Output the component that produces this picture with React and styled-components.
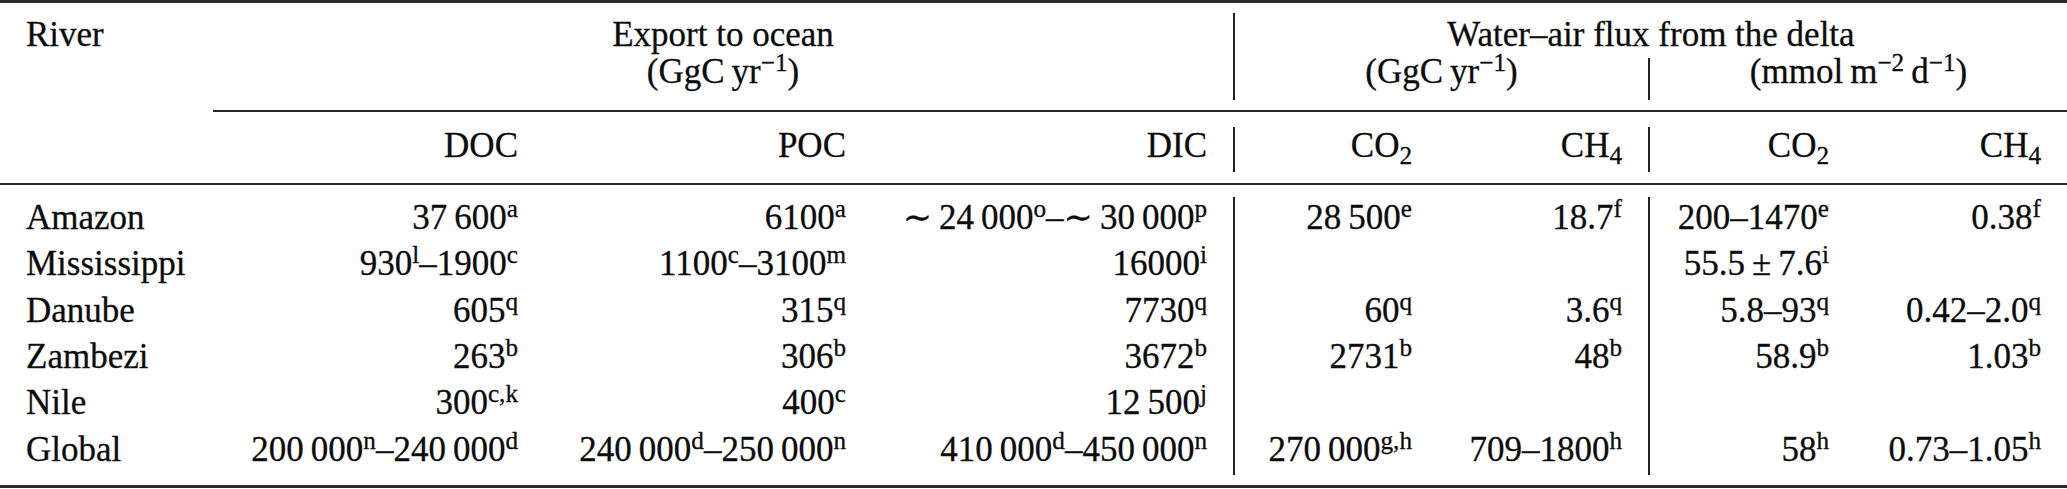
import React from "react";
import styled, { createGlobalStyle } from "styled-components";

const Global = createGlobalStyle`
	html,
	body {
		margin: 0;
		padding: 0;
		background: #fff;
	}
`;

const Table = styled.table`
	width: 2067px;
	table-layout: fixed;
	border-collapse: separate;
	border-spacing: 0;
	font-family: "Liberation Serif", "Times New Roman", "DejaVu Serif", serif;
	font-size: 35px;
	color: #0c0c0c;
	-webkit-text-stroke: 0.3px #0c0c0c;
`;

const Col = styled.col`
	width: ${(p) => p.$w}px;
`;

const Row = styled.tr`
	height: ${(p) => p.$h}px;
`;

const Cell = styled.td`
	padding: ${(p) => p.$pt || 0}px 26px 0 26px;
	font: inherit;
	line-height: 20px;
	vertical-align: top;
	white-space: nowrap;
	text-align: ${(p) => p.$align || "right"};
	border-left: ${(p) => (p.$divider ? "2px solid #222" : "none")};
`;

const Rule = styled.td`
	padding: 0;
	height: 0;
	border-top: ${(p) => p.$w}px solid #2a2a2a;
`;

const Blank = styled.td`
	padding: 0;
`;

const Sup = styled.sup`
	font-size: 0.72em;
	line-height: 0;
	vertical-align: 0.48em;
`;

const Sub = styled.sub`
	font-size: 0.72em;
	line-height: 0;
	vertical-align: -0.28em;
`;

// "^{x}" -> superscript, "_{x}" -> subscript
const Rich = ({ text }) =>
	text.split(/(\^\{[^}]*\}|_\{[^}]*\})/).map((part, i) => {
		if (part.startsWith("^{")) return <Sup key={i}>{part.slice(2, -1)}</Sup>;
		if (part.startsWith("_{")) return <Sub key={i}>{part.slice(2, -1)}</Sub>;
		return part;
	});

const widths = [213, 331, 328, 361, 205, 210, 207, 212];

const T = "\u2009";

const heads = ["DOC", "POC", "DIC", "CO_{2}", "CH_{4}", "CO_{2}", "CH_{4}"];

const rows = [
	["Amazon", `37${T}600^{a}`, "6100^{a}", `∼${T}24${T}000^{o}–∼${T}30${T}000^{p}`, `28${T}500^{e}`, "18.7^{f}", "200–1470^{e}", "0.38^{f}"],
	["Mississippi", "930^{l}–1900^{c}", "1100^{c}–3100^{m}", "16000^{i}", "", "", `55.5${T}±${T}7.6^{i}`, ""],
	["Danube", "605^{q}", "315^{q}", "7730^{q}", "60^{q}", "3.6^{q}", "5.8–93^{q}", "0.42–2.0^{q}"],
	["Zambezi", "263^{b}", "306^{b}", "3672^{b}", "2731^{b}", "48^{b}", "58.9^{b}", "1.03^{b}"],
	["Nile", "300^{c,k}", "400^{c}", `12${T}500^{j}`, "", "", "", ""],
	["Global", `200${T}000^{n}–240${T}000^{d}`, `240${T}000^{d}–250${T}000^{n}`, `410${T}000^{d}–450${T}000^{n}`, `270${T}000^{g,h}`, "709–1800^{h}", "58^{h}", "0.73–1.05^{h}"],
];

const Gap = ({ h }) => (
	<Row $h={h}>
		<Blank colSpan={8} />
	</Row>
);

const App = () => {
	return (
		<>
			<Global />
			<Table>
				<colgroup>
					{widths.map((w, i) => (
						<Col key={i} $w={w} />
					))}
				</colgroup>
				<tbody>
					<tr>
						<Rule colSpan={8} $w={3} />
					</tr>
					<Gap h={10} />
					<Row $h={45}>
						<Cell $align="left" $pt={12}>River</Cell>
						<Cell colSpan={3} $align="center" $pt={12}>Export to ocean</Cell>
						<Cell colSpan={4} $align="center" $pt={12} $divider>
							Water–air flux from the delta
						</Cell>
					</Row>
					<Row $h={42}>
						<Cell />
						<Cell colSpan={3} $align="center" $pt={4}>
							<Rich text={`(GgC${T}yr^{−1})`} />
						</Cell>
						<Cell colSpan={2} $align="center" $pt={4} $divider>
							<Rich text={`(GgC${T}yr^{−1})`} />
						</Cell>
						<Cell colSpan={2} $align="center" $pt={4} $divider>
							<Rich text={`(mmol${T}m^{−2}${T}d^{−1})`} />
						</Cell>
					</Row>
					<Gap h={10} />
					<tr>
						<Blank />
						<Rule colSpan={7} $w={2} />
					</tr>
					<Gap h={15} />
					<Row $h={45}>
						<Cell />
						{heads.map((h, i) => (
							<Cell key={i} $pt={9} $divider={i === 3 || i === 5}>
								<Rich text={h} />
							</Cell>
						))}
					</Row>
					<Gap h={11} />
					<tr>
						<Rule colSpan={8} $w={2} />
					</tr>
					<Gap h={12} />
					{rows.map((r) => (
						<Row key={r[0]} $h={46.33}>
							{r.map((v, i) => (
								<Cell
									key={i}
									$pt={11}
									$align={i === 0 ? "left" : "right"}
									$divider={i === 4 || i === 6}
								>
									<Rich text={v} />
								</Cell>
							))}
						</Row>
					))}
					<Gap h={10} />
					<tr>
						<Rule colSpan={8} $w={3} />
					</tr>
				</tbody>
			</Table>
		</>
	);
};

export default App;
